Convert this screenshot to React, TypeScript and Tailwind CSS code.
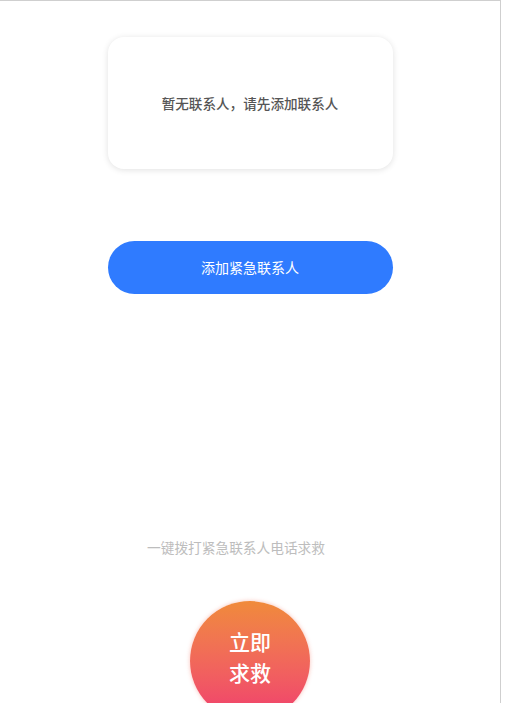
export default function App() {
  return (
    <div
      className="h-[703px] w-[505px] overflow-hidden bg-white"
      style={{ fontFamily: '"Noto Sans CJK SC", "Noto Sans", sans-serif' }}
    >
      <div className="h-[703px] w-[501px] border-t border-r border-[#cfcfcf] bg-white">
        <div className="flex flex-col items-center pt-[36px]">
          {/* Empty contacts card */}
          <div className="flex h-[132px] w-[285px] items-center justify-center rounded-[16px] bg-white shadow-[0_1px_6px_rgba(0,0,0,0.12)]">
            <span className="text-[13.6px] font-medium text-[#555]">暂无联系人，请先添加联系人</span>
          </div>

          {/* Add button */}
          <button className="mt-[72px] flex h-[53px] w-[285px] items-center justify-center rounded-full bg-[#2f7bff] text-[14px] text-white">
            添加紧急联系人
          </button>

          {/* Hint */}
          <p className="mt-[243px] mr-[28px] text-[13.7px] text-[#bdbdbd]">一键拨打紧急联系人电话求救</p>

          {/* SOS */}
          <div className="mt-[43px] flex h-[120px] w-[120px] flex-col items-center justify-center rounded-full bg-gradient-to-b from-[#f08a3a] to-[#f03a6e] pb-[8px] text-[21px] leading-[31px] font-medium text-white shadow-[0_0_4px_rgba(240,100,80,0.4)]">
            <span>立即</span>
            <span>求救</span>
          </div>
        </div>
      </div>
    </div>
  );
}
